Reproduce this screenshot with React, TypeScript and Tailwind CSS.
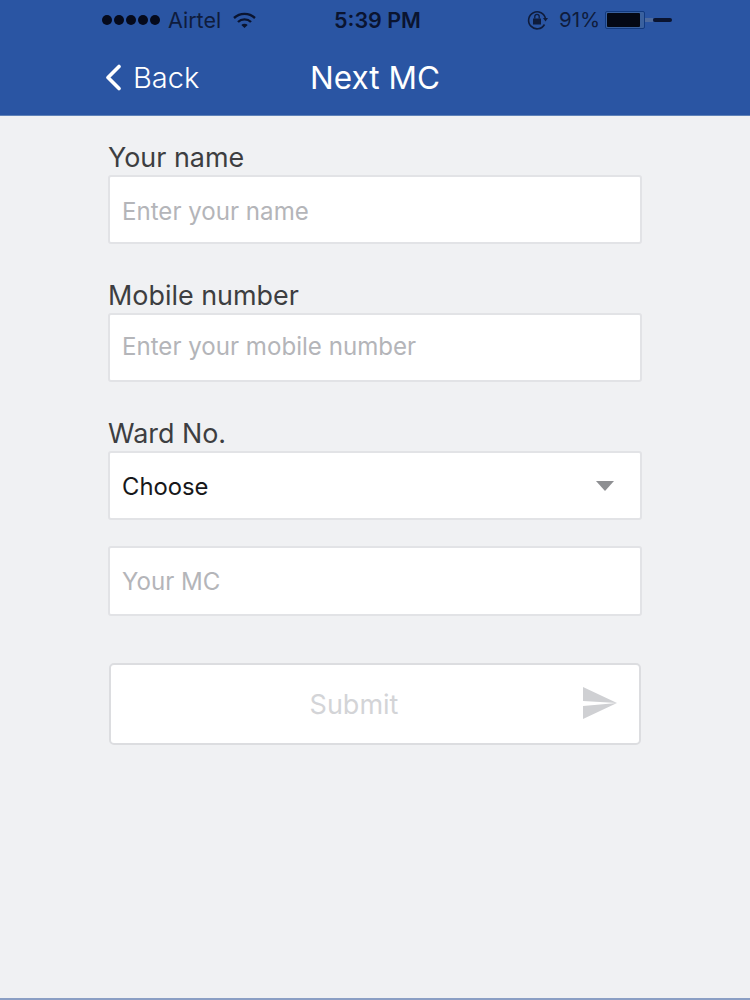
import React from "react";

const inputBox =
  "h-[69px] w-full rounded-[3px] border-2 border-[#e2e3e6] bg-white px-[12px] text-[24.1px] text-[#111] outline-none placeholder:text-[#b4b5b9]";

function Field({ label, placeholder, inputClass }: { label: string; placeholder: string; inputClass: string }) {
  return (
    <div className="flex flex-col">
      <label className="h-[36px] text-[26.9px] leading-[36px] text-[#3d3e41]">{label}</label>
      <input className={`${inputBox} ${inputClass}`} placeholder={placeholder} readOnly />
    </div>
  );
}

function StatusBar() {
  return (
    <div className="relative flex h-[40px] items-center pl-[102px] text-[20.5px] text-[#0f1c3c]">
      <div className="flex gap-[2px]">
        {[0, 1, 2, 3, 4].map((i) => (
          <span key={i} className="h-[10px] w-[10px] rounded-full bg-[#050a1c]" />
        ))}
      </div>
      <span className="ml-[8px] w-[55px] text-[21.5px]">Airtel</span>
      <svg className="ml-[10px]" width="23" height="17" viewBox="0 0 23 17" fill="none" stroke="#0a1430" strokeWidth="2.4">
        <path d="M1 6 C7 0.5 16 0.5 22 6" />
        <path d="M5 10 C8.5 6.5 14.5 6.5 18 10" />
        <path d="M11.5 16 L8.3 13 C10 11.4 13 11.4 14.7 13 Z" fill="#0a1430" stroke="none" />
      </svg>
      <span className="ml-[78px] w-[86px] whitespace-nowrap text-[21.5px] font-semibold text-[#0a1430]">5:39 PM</span>
      <svg className="ml-[106px]" width="23" height="22" viewBox="0 0 23 22" fill="none" stroke="#0f1c3c" strokeWidth="1.6">
        <path d="M18.5 15.5 A8.5 8.5 0 1 1 19.5 10" />
        <path d="M17 9 L22 9 L19.5 12.5 Z" fill="#0f1c3c" stroke="none" />
        <rect x="7" y="9.5" width="8" height="6" fill="#0f1c3c" stroke="none" />
        <path d="M8.8 9.5 V7.6 a2.2 2.2 0 0 1 4.4 0 V9.5" strokeWidth="1.3" />
      </svg>
      <span className="ml-[10px] w-[46px]">91%</span>
      <div className="flex h-[18px] w-[40px] rounded-[2px] border border-[#123a80] bg-[#3a619f] p-[1px]">
        <div className="w-[33px] rounded-[1px] bg-[#040814]" />
      </div>
      <svg width="28" height="8" viewBox="0 0 28 8">
        <rect x="0" y="2" width="8" height="4" fill="#4d6a9e" />
        <rect x="8" y="2" width="19" height="4" rx="2" fill="#0a1430" />
      </svg>
    </div>
  );
}

export default function App() {
  return (
    <div className="flex h-[1000px] flex-col border-b-2 border-[#8b9fc4] bg-[#f0f1f3] font-['Inter',sans-serif]">
      <header className="h-[116px] border-b border-[#5f82b8] bg-[#2a55a3]">
        <StatusBar />
        <nav className="grid h-[75px] grid-cols-[1fr_auto_1fr] items-center text-white">
          <div className="flex items-center pl-[105px]">
            <svg width="17" height="27" viewBox="0 0 17 27" fill="none" stroke="#fff" strokeWidth="3.6" strokeLinecap="round" strokeLinejoin="round">
              <path d="M14 2.5 L3 13.5 L14 24.5" />
            </svg>
            <span className="ml-[11px] text-[29px] font-light">Back</span>
          </div>
          <h1 className="text-[31.5px] font-normal">Next MC</h1>
          <div />
        </nav>
      </header>

      <form className="ml-[108px] flex w-[534px] flex-col self-start pt-[23px]">
        <Field label="Your name" placeholder="Enter your name" inputClass="pt-[3px]" />
        <div className="mt-[33px]">
          <Field label="Mobile number" placeholder="Enter your mobile number" inputClass="pb-[3px]" />
        </div>
        <div className="mt-[33px] flex flex-col">
          <label className="h-[36px] text-[26.9px] leading-[36px] text-[#3d3e41]">Ward No.</label>
          <div className="flex h-[69px] items-center justify-between rounded-[3px] border-2 border-[#e2e3e6] bg-white pl-[12px] pr-[26px] text-[23.8px] text-[#17181a]">
            <span className="pt-[2px]">Choose</span>
            <span className="h-0 w-0 border-x-[9px] border-t-[10px] border-x-transparent border-t-[#8e8f92]" />
          </div>
        </div>
        <input className={`${inputBox} mt-[26px] h-[70px]`} placeholder="Your MC" readOnly />
        <button
          type="button"
          className="relative mx-[1px] mt-[47px] flex h-[82px] items-center justify-center rounded-[5px] border-2 border-[#dcdde0] bg-white pr-[42px] pt-[3px] text-[27px] text-[#d3d4d7]"
        >
          Submit
          <svg className="absolute right-[22px] top-[22px]" width="35" height="32" viewBox="0 0 35 32" fill="#cfd0d3">
            <path d="M1 0 L35 16 L1 14 Z" />
            <path d="M1 32 L35 16 L1 19 Z" />
          </svg>
        </button>
      </form>
    </div>
  );
}
